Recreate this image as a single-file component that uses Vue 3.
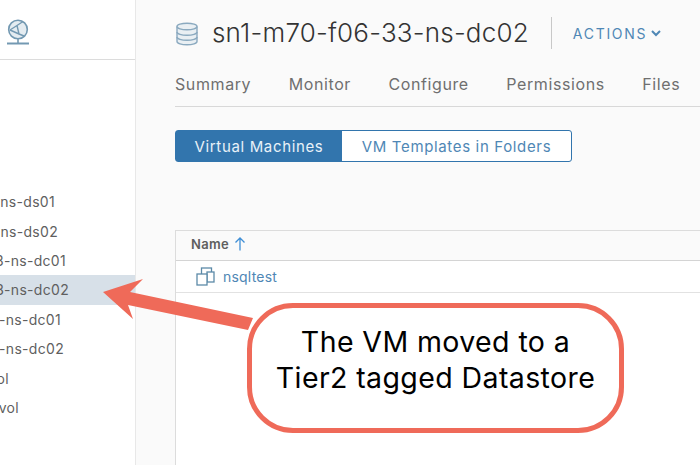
<script setup>
const rows = [
  { text: 'ns-ds01', end: 55 },
  { text: 'ns-ds02', end: 58 },
  { text: '3-ns-dc01', end: 66 },
  { text: '3-ns-dc02', end: 69, selected: true },
  { text: '-ns-dc01', end: 61 },
  { text: '-ns-dc02', end: 64 },
  { text: 'ol', end: 9 },
  { text: 'vol', end: 19 }
]
const tabs = ['Summary', 'Monitor', 'Configure', 'Permissions', 'Files']
</script>

<template>
  <div class="page">
    <aside class="sidebar">
      <div class="side-head">
        <svg class="globe" width="24" height="28" viewBox="0 0 24 28" fill="none" stroke="#7399b2" stroke-width="1.6">
          <circle cx="12" cy="11.500" r="9.300" fill="#e4ecf1" />
          <path d="M4 12l7-4.500 6-4M4 12l9 4 5 2M11 7.500l2 8.500" stroke-width="1.400" />
          <path d="M12 21v4" />
          <path d="M1 25.500h22" stroke-width="2" />
        </svg>
      </div>
      <div class="tree">
        <div v-for="(r, i) in rows" :key="i" class="row" :class="{ selected: r.selected }">
          <span class="row-text" :style="{ width: r.end + 'px' }">{{ r.text }}</span>
        </div>
      </div>
    </aside>
    <main class="main">
      <header class="title-bar">
        <svg class="db" width="22" height="24" viewBox="0 0 22 24" fill="#e9eff3" stroke="#8aa9bf" stroke-width="1.400">
          <path d="M1 4.500v15c0 1.800 4.500 3.300 10 3.300s10-1.500 10-3.300v-15" />
          <ellipse cx="11" cy="4.500" rx="10" ry="3.300" />
          <path d="M1 10c0 1.800 4.500 3.300 10 3.300s10-1.500 10-3.300M1 15c0 1.800 4.500 3.300 10 3.300s10-1.500 10-3.300" fill="none" />
        </svg>
        <h1 class="title">sn1-m70-f06-33-ns-dc02</h1>
        <span class="divider"></span>
        <span class="actions">ACTIONS</span>
        <svg class="chev" width="10" height="7" viewBox="0 0 10 7" fill="none" stroke="#4f87b5" stroke-width="2"><path d="M1 1l4 4 4-4" /></svg>
      </header>
      <nav class="tabs">
        <span v-for="t in tabs" :key="t" class="tab">{{ t }}</span>
      </nav>
      <div class="segments">
        <span class="seg active">Virtual Machines</span>
        <span class="seg">VM Templates in Folders</span>
      </div>
      <section class="table">
        <div class="thead">
          <span class="th">Name</span>
          <svg width="12" height="14" viewBox="0 0 12 14" fill="none" stroke="#3f8fd6" stroke-width="1.300"><path d="M6 13.500V1M1.500 5.500L6 1l4.500 4.500" /></svg>
        </div>
        <div class="tr">
          <svg width="19" height="19" viewBox="0 0 19 19" fill="#fff" stroke="#5c8aa8" stroke-width="1.300">
            <rect x="5.500" y="1" width="10" height="10" />
            <rect x="11" y="5" width="7" height="10" />
            <rect x="1" y="7" width="10" height="11" />
          </svg>
          <span class="vm">nsqltest</span>
        </div>
      </section>
    </main>

    <svg class="arrow" width="160" height="60" viewBox="0 0 160 60">
      <path d="M3 22 43 9 30 22 153 48 148 60 28 35 33 49Z" fill="#ef6a59" />
    </svg>
    <div class="callout">The VM moved to a<br />Tier2 tagged Datastore</div>
  </div>
</template>

<style scoped>
.page {
  position: relative;
  display: flex;
  width: 700px;
  height: 465px;
  overflow: hidden;
  background: #fafafa;
  font-family: Inter, "Liberation Sans", sans-serif;
}
.sidebar {
  flex: none;
  width: 135px;
  height: 100%;
  background: #fff;
  border-right: 1px solid #e8e8e8;
}
.side-head {
  height: 60px;
  box-sizing: border-box;
  border-bottom: 1px solid #dcdcdc;
  padding: 18px 0 0 6px;
}
.globe { display: block; }
.tree { padding-top: 127px; }
.row {
  display: flex;
  align-items: center;
  height: 29.400px;
  font-size: 14px;
  letter-spacing: 0.300px;
  color: #5f5f5f;
}
.row.selected { background: #d7e0e8; }
.row-text {
  display: flex;
  flex: none;
  justify-content: flex-end;
  overflow: hidden;
  white-space: nowrap;
}
.main {
  flex: 1;
  min-width: 0;
  padding-left: 39px;
  display: flex;
  flex-direction: column;
}
.title-bar {
  display: flex;
  align-items: center;
  height: 66px;
  box-sizing: border-box;
}
.db { flex: none; margin: 2px 0 0 1px; }
.title {
  margin: 0 0 0 14px;
  font-size: 26px;
  line-height: 32px;
  font-weight: 300;
  letter-spacing: 0.200px;
  color: #333;
  white-space: nowrap;
}
.divider {
  width: 1px;
  height: 32px;
  background: #c8c8c8;
  margin: 0 21px 0 22px;
}
.actions {
  font-size: 14px;
  letter-spacing: 1.700px;
  color: #4f87b5;
}
.chev { margin-left: 4px; }
.tabs {
  display: flex;
  gap: 37.500px;
  height: 41px;
  border-bottom: 1px solid #d8d8d8;
  padding-top: 8px;
  box-sizing: border-box;
  font-size: 16px;
  letter-spacing: 0.600px;
  color: #6f6f6f;
}
.segments {
  display: flex;
  width: 397px;
  height: 32px;
  margin-top: 23px;
  border: 1px solid #3275ad;
  border-radius: 3px;
  box-sizing: border-box;
  background: #fff;
  font-size: 15px;
  letter-spacing: 0.650px;
  color: #4f87b5;
}
.seg {
  display: flex;
  align-items: center;
  justify-content: center;
  flex: 1;
}
.seg.active {
  flex: none;
  width: 166px;
  background: #3275ad;
  color: #e8f1f8;
}
.table {
  flex: 1;
  margin-top: 68px;
  background: #fff;
  border-left: 1px solid #dcdcdc;
  border-top: 1px solid #dcdcdc;
}
.thead {
  display: flex;
  align-items: center;
  gap: 5px;
  height: 30px;
  padding: 0 0 3px 15px;
  box-sizing: border-box;
  background: #fafafa;
  border-bottom: 1px solid #d4d4d4;
  font-size: 13px;
  font-weight: 600;
  letter-spacing: 0.300px;
  color: #5f5f5f;
}
.tr {
  display: flex;
  align-items: center;
  gap: 8px;
  height: 32px;
  padding-left: 20px;
  border-bottom: 1px solid #e2e2e2;
  box-sizing: border-box;
  font-size: 14px;
  letter-spacing: 0.200px;
  color: #4f87b5;
}
.arrow {
  position: absolute;
  left: 100px;
  top: 270px;
}
.callout {
  position: absolute;
  left: 247px;
  top: 303px;
  width: 377px;
  height: 130px;
  box-sizing: border-box;
  padding-top: 16px;
  border: 5px solid #ef6a59;
  border-radius: 46px;
  background: #fff;
  text-align: center;
  font-size: 28.500px;
  line-height: 36px;
  letter-spacing: 0.400px;
  color: #000;
}
</style>
